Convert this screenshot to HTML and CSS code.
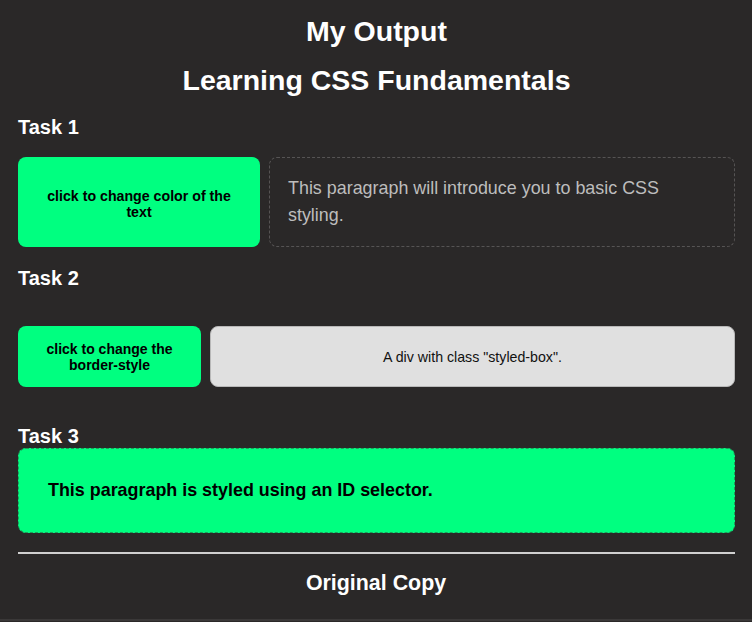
FILE: index.html
```html
<!DOCTYPE html>
<html lang="en">
<head>
<meta charset="utf-8">
<title>My Output</title>
<link rel="stylesheet" href="styles.css">
</head>
<body>
<main class="page">
  <h1 class="title">My Output</h1>
  <h1 class="subtitle">Learning CSS Fundamentals</h1>

  <h2 class="task">Task 1</h2>
  <div class="row row-1">
    <button class="btn btn-1">click to change color of the text</button>
    <p class="intro">This paragraph will introduce you to basic CSS styling.</p>
  </div>

  <h2 class="task task-2">Task 2</h2>
  <div class="row row-2">
    <button class="btn btn-2">click to change the border-style</button>
    <div class="styled-box">A div with class "styled-box".</div>
  </div>

  <h2 class="task task-3">Task 3</h2>
  <p class="id-para">This paragraph is styled using an ID selector.</p>

  <hr class="divider">
  <section class="footer">
    <h2 class="copy-title">Original Copy</h2>
  </section>
</main>
</body>
</html>
```

FILE: styles.css
```css
html, body {
  margin: 0;
  padding: 0;
  background: #2a2828;
}

body {
  font-family: "Liberation Sans", Arial, sans-serif;
  color: #ffffff;
  height: 622px;
  overflow: hidden;
}

.page {
  padding: 0 17px 0 18px;
  display: flex;
  flex-direction: column;
}

.title {
  margin: 14px 0 0;
  font-size: 28.5px;
  line-height: 34px;
  text-align: center;
  font-weight: bold;
}

.subtitle {
  margin: 15px 0 0;
  font-size: 28.5px;
  line-height: 34px;
  text-align: center;
  font-weight: bold;
}

.task {
  margin: 18px 0 0;
  font-size: 20px;
  line-height: 24px;
  font-weight: bold;
}

.task-2 {
  margin-top: 19px;
}

.task-3 {
  margin-top: 37px;
}

.row {
  display: flex;
  gap: 9px;
  align-items: stretch;
}

.row-1 {
  margin-top: 18px;
  height: 90px;
}

.row-2 {
  margin-top: 36px;
  height: 61px;
}

.btn {
  font-family: "Liberation Sans", Arial, sans-serif;
  font-weight: bold;
  font-size: 14px;
  line-height: 16px;
  color: #000;
  background: #00ff80;
  border: none;
  border-radius: 8px;
  padding: 0 20px;
  text-align: center;
  flex: none;
}

.btn-1 {
  width: 242px;
  padding-top: 4px;
  font-size: 14.2px;
}

.btn-2 {
  width: 183px;
  padding: 0 22px;
}

.intro {
  flex: 1;
  margin: 0;
  box-sizing: border-box;
  padding: 17px 18px;
  border: 1px dashed #565454;
  border-radius: 8px;
  color: #bdbdbd;
  font-size: 17.9px;
  line-height: 27px;
}

.styled-box {
  flex: 1;
  display: flex;
  align-items: center;
  justify-content: center;
  background: #e0e0e0;
  border: 1px solid #b8b8b8;
  border-radius: 8px;
  color: #111;
  font-size: 14.2px;
}

.id-para {
  margin: 0;
  height: 85px;
  box-sizing: border-box;
  display: flex;
  align-items: center;
  padding: 0 29px;
  background: #00ff80;
  border: 1px dashed #1f9c5c;
  border-radius: 8px;
  color: #000;
  font-weight: bold;
  font-size: 17.9px;
  line-height: 21px;
}

.divider {
  margin: 19px 0 0;
  height: 2px;
  border: none;
  background: #d0d0d0;
}

.footer {
  margin: 0 -17px 0 -18px;
  padding: 16px 0 23px;
  border-bottom: 2px solid #3a3838;
}

.copy-title {
  margin: 0;
  font-size: 21.4px;
  line-height: 26px;
  text-align: center;
  font-weight: bold;
}
```
